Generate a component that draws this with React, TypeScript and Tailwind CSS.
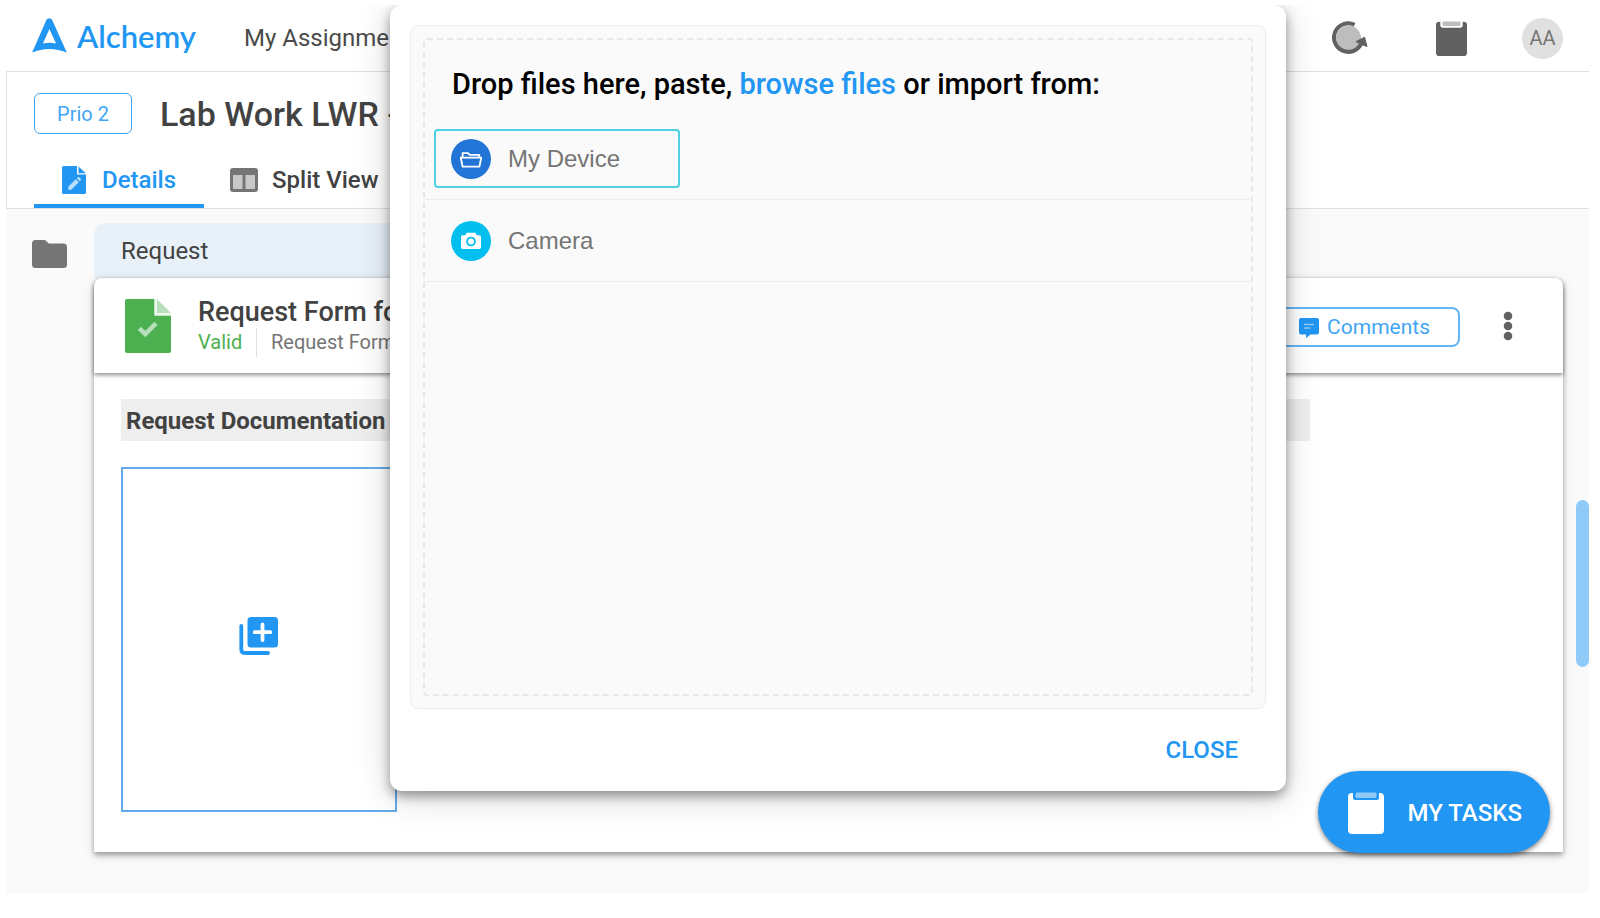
import React from "react";

function LogoMark() {
  return (
    <svg viewBox="0 0 35 35" className="h-[35px] w-[35px]" aria-hidden="true">
      <path
        fill="#2196f3"
        fillRule="evenodd"
        d="M17.3 0.2c1.3 0 2.3 0.7 2.9 1.9L34.8 34.6C23 29.8 11.8 29.8 0.1 34.6L14.4 2.1C15 0.9 16 0.2 17.3 0.2ZM17.4 11L11 25.600C15.400 24.500 19.600 24.500 24 25.600Z"
      />
    </svg>
  );
}

function RefreshIcon() {
  return (
    <svg viewBox="0 0 36 34" className="h-[34px] w-9" aria-hidden="true">
      <circle cx="16.500" cy="17" r="12.500" fill="#bdbdbd" />
      <path d="M22.600 3.700A14.300 14.300 0 1 0 29.500 22" fill="none" stroke="#616161" strokeWidth="4" />
      <path d="M32.600 16.200L35 25.600L30.500 23.800L24 20.600Z" fill="#616161" stroke="#616161" strokeWidth="1" strokeLinejoin="round" />
    </svg>
  );
}

function ClipboardIcon({ className, body, gap, clip }: { className: string; body: string; gap: string; clip: string }) {
  return (
    <svg viewBox="0 0 36 42" className={className} preserveAspectRatio="none" aria-hidden="true">
      <rect x="0" y="1" width="36" height="41" rx="4" fill={body} />
      <path d="M5 0H31V5.500Q31 8 28.500 8H7.500Q5 8 5 5.500Z" fill={gap} />
      <rect x="7.500" y="0.500" width="21" height="5.500" rx="1.500" fill={clip} />
    </svg>
  );
}

function EditDocIcon() {
  return (
    <svg viewBox="0 0 24 28" className="h-7 w-6" aria-hidden="true">
      <path d="M1.500 0H15V8.500H24V26.500Q24 28 22.500 28H1.500Q0 28 0 26.500V1.500Q0 0 1.500 0Z" fill="#2196f3" />
      <path d="M16.500 0.500L23.800 7.200H16.500Z" fill="#2196f3" />
      <path d="M6.200 20.800L13.800 13.200L16.800 16.200L9.200 23.800H6.200ZM14.700 12.300L15.800 11.200Q16.500 10.600 17.200 11.200L18.700 12.800Q19.300 13.500 18.700 14.200L17.700 15.300Z" fill="#bbdefb" />
    </svg>
  );
}

function SplitIcon() {
  return (
    <svg viewBox="0 0 28 24" className="h-6 w-7" aria-hidden="true">
      <rect width="28" height="24" rx="3" fill="#757575" />
      <rect x="3" y="7" width="9.500" height="14" fill="#c8c8c8" />
      <rect x="15.500" y="7" width="9.500" height="14" fill="#c8c8c8" />
    </svg>
  );
}

function FolderIcon() {
  return (
    <svg viewBox="0 0 35 28" className="h-7 w-[35px]" aria-hidden="true">
      <path d="M3.500 0H13L16.800 3.500H31.500Q35 3.500 35 7V24.500Q35 28 31.500 28H3.500Q0 28 0 24.500V3.500Q0 0 3.500 0Z" fill="#757575" />
    </svg>
  );
}

function ValidDocIcon() {
  return (
    <svg viewBox="0 0 46 54" className="h-[54px] w-[46px]" aria-hidden="true">
      <path d="M2 0H29.500V16.500H46V52Q46 54 44 54H2Q0 54 0 52V2Q0 0 2 0Z" fill="#4caf50" />
      <path d="M29.500 0H31.500V14.500H46V16.500H29.500Z" fill="#e8f5e9" />
      <path d="M32 0L46 14H32Z" fill="#b7dfb9" />
      <path d="M14.300 29.300L20.300 35L31 24.300" fill="none" stroke="#b7dfb9" strokeWidth="4.500" />
    </svg>
  );
}

function CommentIcon() {
  return (
    <svg viewBox="0 0 20 20" className="h-5 w-5" aria-hidden="true">
      <path d="M2 0H18Q20 0 20 2V14.500Q20 16.500 18 16.500H11.500L7 20V16.500H2Q0 16.500 0 14.500V2Q0 0 2 0Z" fill="#2196f3" />
      <path d="M5 6.500H15M5 10H11.500" stroke="#90caf9" strokeWidth="1.300" />
    </svg>
  );
}

function AddLibraryIcon() {
  return (
    <svg viewBox="0 0 40 40" className="h-10 w-10" aria-hidden="true">
      <path d="M2.300 10V33.500Q2.300 37 5.800 37H29" fill="none" stroke="#2196f3" strokeWidth="3.800" strokeLinecap="round" />
      <rect x="8.500" y="1" width="30.500" height="30.500" rx="3.500" fill="#2196f3" />
      <path d="M23.500 8.500V24M15.700 16.200H31.300" stroke="#fff" strokeWidth="3.800" strokeLinecap="round" />
    </svg>
  );
}

function DeviceIcon() {
  return (
    <svg viewBox="0 0 40 40" className="h-10 w-10" aria-hidden="true">
      <circle cx="20" cy="20" r="20" fill="#2275d7" />
      <path
        d="M11.600 17.800V14.200H17.200L18.600 15.900H28.300V17.800M9.800 18.700H30.200L28.400 27.700H11.600Z"
        fill="none"
        stroke="#fff"
        strokeWidth="1.800"
        strokeLinejoin="round"
      />
    </svg>
  );
}

function CameraIcon() {
  return (
    <svg viewBox="0 0 40 40" className="h-10 w-10" aria-hidden="true">
      <circle cx="20" cy="20" r="20" fill="#03bfef" />
      <path
        fill="#fff"
        fillRule="evenodd"
        d="M15.700 11.800H24.300L25.700 14.300H28.500Q30 14.300 30 15.800V26.300Q30 27.900 28.500 27.900H11.500Q10 27.900 10 26.300V15.800Q10 14.300 11.500 14.300H14.300ZM20 15.700A4.800 4.800 0 1 0 20 25.300A4.800 4.800 0 1 0 20 15.700Z"
      />
      <circle cx="20" cy="20.500" r="3" fill="#fff" />
    </svg>
  );
}

function Header() {
  return (
    <header className="flex h-[66px] items-center pr-[26px] pl-[26px]">
      <a href="#" className="flex items-start gap-2.5 pb-1">
        <LogoMark />
        <span className="font-[Lato] text-[31px] leading-9 font-semibold text-[#2196f3]">Alchemy</span>
      </a>
      <a href="#" className="ml-12 text-2xl text-[#4a4a4a]">My Assignments</a>
      <div className="ml-auto flex items-center">
        <button aria-label="Refresh"><RefreshIcon /></button>
        <button aria-label="Tasks" className="ml-[68px]">
          <ClipboardIcon className="h-[35px] w-[31px]" body="#616161" gap="#ffffff" clip="#bdbdbd" />
        </button>
        <button className="ml-[55px] h-[41px] w-[41px] rounded-full bg-[#e0e0e0] text-xl text-[#757575]">AA</button>
      </div>
    </header>
  );
}

function TitleBar() {
  return (
    <section className="border-y border-l border-[#e0e0e0] bg-white pl-[27px]">
      <div className="flex items-center gap-7 pt-[21px]">
        <span className="flex h-[41px] w-[98px] items-center justify-center rounded-md border border-[#42a5f5] text-xl text-[#42a5f5]">
          Prio 2
        </span>
        <h1 className="text-[34px] leading-10 font-medium text-[#424242]">Lab Work LWR -</h1>
      </div>
      <nav className="mt-[21px] flex text-2xl font-medium">
        <button className="flex h-[53px] w-[170px] items-center gap-4 border-b-4 border-[#2196f3] pt-px pl-7 text-[#2196f3]">
          <EditDocIcon />
          Details
        </button>
        <button className="flex h-[53px] items-center gap-3.5 border-b-4 border-transparent pt-px pl-[26px] text-[#424242]">
          <SplitIcon />
          Split View
        </button>
      </nav>
    </section>
  );
}

function RequestCard() {
  return (
    <div className="min-w-0 flex-1">
      <h2 className="flex h-[55px] w-1/2 items-center rounded-t-xl bg-[#e8f0f8] pl-[27px] text-2xl text-[#424242]">
        Request
      </h2>
      <article className="rounded-t-lg bg-white shadow-[0_3px_5px_rgba(0,0,0,0.3),0_3px_12px_rgba(0,0,0,0.14)]">
        <div className="flex h-[95px] items-center rounded-t-lg pr-[50px] pl-[31px] shadow-[0_2px_4px_rgba(0,0,0,0.45)]">
          <ValidDocIcon />
          <div className="ml-[27px] pt-0.5">
            <h3 className="text-[27px] leading-8 font-medium text-[#424242]">Request Form for</h3>
            <div className="flex items-center text-xl leading-[29px]">
              <span className="w-[58px] text-[#4caf50]">Valid</span>
              <span className="border-l border-[#e0e0e0] pl-3.5 text-[#757575]">Request Form</span>
            </div>
          </div>
          <button className="mt-[3px] ml-auto flex h-10 items-center gap-2 rounded-lg border-2 border-[#64b5f6] pt-0.5 pr-7 pl-10 text-[21px] text-[#42a5f5]">
            <CommentIcon />
            Comments
          </button>
          <button aria-label="More options" className="ml-[43px]">
            <svg viewBox="0 0 10 30" className="h-[30px] w-2.5" fill="#616161" aria-hidden="true">
              <circle cx="5" cy="5" r="4.300" />
              <circle cx="5" cy="15" r="4.300" />
              <circle cx="5" cy="25" r="4.300" />
            </svg>
          </button>
        </div>
        <div className="px-[27px] pt-[26px] pb-10">
          <h4 className="w-[84%] bg-[#eeeeee] px-[5px] pt-0.5 text-[24px] leading-10 font-bold text-[#424242]">
            Request Documentation
          </h4>
          <button
            aria-label="Add file"
            className="mt-[26px] flex h-[345px] w-[276px] items-center justify-center border-2 border-[#64aaea] pb-2"
          >
            <AddLibraryIcon />
          </button>
        </div>
      </article>
    </div>
  );
}

function UploadDialog() {
  return (
    <div
      role="dialog"
      aria-label="Upload files"
      className="w-[56vw] rounded-xl bg-white px-5 pt-5 shadow-[0_5px_12px_rgba(0,0,0,0.38),0_6px_36px_rgba(0,0,0,0.16)]"
    >
      <div className="rounded-lg border border-[#eeeeee] bg-[#fafafa] p-3">
        <div className="min-h-[658px] rounded border-2 border-dashed border-[#e8e8e8] pt-[22px]">
          <p className="h-14 pl-[27px] text-[29px] leading-[44px] font-medium text-black">
            Drop files here, paste, <button className="text-[#2196f3]">browse files</button> or import from:
          </p>
          <ul className="font-['Liberation_Sans',sans-serif] text-2xl text-[#757575]">
            <li className="flex h-[82px] items-center border-b border-[#eeeeee] pl-[9px]">
              <button className="flex h-[59px] w-[246px] items-center gap-[17px] rounded border-2 border-[#4dd0e1] pl-[15px]">
                <DeviceIcon />
                My Device
              </button>
            </li>
            <li className="flex h-[82px] items-center border-b border-[#eeeeee] pl-[26px]">
              <button className="flex items-center gap-[17px]">
                <CameraIcon />
                Camera
              </button>
            </li>
          </ul>
        </div>
      </div>
      <div className="flex h-[82px] items-center justify-end pr-7">
        <button className="text-2xl font-medium text-[#2196f3]">CLOSE</button>
      </div>
    </div>
  );
}

export default function App() {
  return (
    <div className="min-h-screen bg-white pt-[5px] pr-[11px] pb-[25px] pl-1.5 font-[Roboto,sans-serif]">
      <div className="relative overflow-hidden">
        <Header />
        <TitleBar />
        <main className="flex bg-[#fafafa] pt-3.5 pr-[26px] pb-[41px] pl-[26px]">
          <button aria-label="Files" className="mt-[17px] mr-[27px] self-start">
            <FolderIcon />
          </button>
          <RequestCard />
        </main>
        <div className="absolute top-[495px] right-0 h-[167px] w-[13px] rounded-full bg-[#90caf9]" />
        <div className="absolute inset-x-0 top-0 flex justify-center pl-[81px]">
          <UploadDialog />
        </div>
        <button className="absolute right-[39px] bottom-10 flex h-[82px] items-center gap-6 rounded-full bg-[#2196f3] pt-0.5 pr-7 pl-[30px] text-2xl font-medium text-white shadow-[0_2px_5px_rgba(0,0,0,0.5)]">
          <ClipboardIcon className="h-[42px] w-9" body="#ffffff" gap="#2196f3" clip="#90caf9" />
          MY TASKS
        </button>
      </div>
    </div>
  );
}
